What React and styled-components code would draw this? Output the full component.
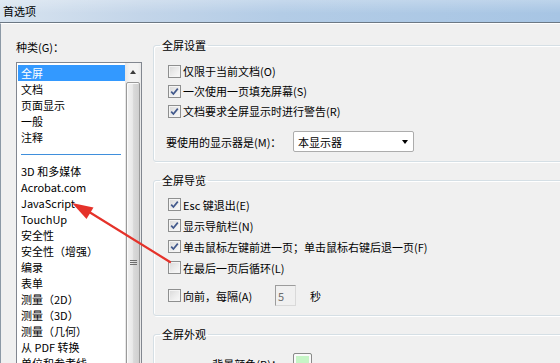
import React from "react";
import styled, { createGlobalStyle } from "styled-components";

const Global = createGlobalStyle`
  *, *::before, *::after { box-sizing: border-box; }
  html, body { margin: 0; padding: 0; overflow: hidden; background: #f0f0f0; }
  body {
    font-family: "Noto Sans CJK SC", "Open Sans", sans-serif;
    font-size: 11px;
    color: #000;
  }
`;

const Window = styled.div`
  position: relative;
  width: 560px;
  height: 363px;
  overflow: hidden;
  display: flex;
  flex-direction: column;
  background: #f0f0f0;
`;

const TitleBar = styled.div`
  height: 23px;
  flex: none;
  display: flex;
  align-items: center;
  padding: 0 0 1px 3px;
  line-height: 16px;
  background:
    linear-gradient(180deg, rgba(255,255,255,0.25) 0%, rgba(255,255,255,0) 60%),
    linear-gradient(90deg, #d7e3ef 0%, #c3d5e9 25%, #b3cce6 50%, #a7c5e4 100%);
  border-bottom: 1px solid #6c7884;
`;

const Body = styled.div`
  flex: 1;
  min-height: 0;
  display: flex;
  border-left: 1px solid #8c99a6;
  border-top: 1px solid #ffffff;
`;

const LeftPane = styled.div`
  width: 152px;
  flex: none;
  padding: 15px 0 0 15px;
  display: flex;
  flex-direction: column;
`;

const FieldLabel = styled.div`
  height: 16px;
  line-height: 16px;
`;

const ListBox = styled.div`
  margin-top: 7px;
  width: 126px;
  height: 330px;
  flex: none;
  border: 1px solid #828790;
  background: #fff;
  display: flex;
`;

const ListItems = styled.div`
  flex: 1;
  padding: 2px 0 0 1px;
  display: flex;
  flex-direction: column;
`;

const ListItem = styled.div`
  height: 16px;
  line-height: 16px;
  padding-left: 3px;
  white-space: nowrap;
  background: ${(p) => (p.$selected ? "#3399ff" : "transparent")};
  color: ${(p) => (p.$selected ? "#fff" : "#000")};
`;

const Separator = styled.div`
  height: 18px;
  display: flex;
  align-items: center;
  padding: 0 4px 0 3px;
  &::after {
    content: "";
    flex: 1;
    height: 1px;
    background: #3f8fdc;
  }
`;

const ScrollBar = styled.div`
  width: 16px;
  flex: none;
  display: flex;
  flex-direction: column;
  background: linear-gradient(90deg, #e6e6e6 0%, #f3f3f3 30%, #f3f3f3 80%, #e9e9e9 100%);
`;

const ScrollButton = styled.div`
  height: 17px;
  flex: none;
  display: flex;
  align-items: center;
  justify-content: center;
  &::after {
    content: "";
    width: 0;
    height: 0;
    border-left: 3.5px solid transparent;
    border-right: 3.5px solid transparent;
    border-bottom: 4px solid #3c3c3c;
  }
`;

const ScrollThumb = styled.div`
  margin: 2px 1px 0 1px;
  height: 362px;
  flex: none;
  border: 1px solid #9a9a9a;
  border-radius: 2px;
  background: linear-gradient(90deg, #f2f2f2 0%, #e9e9e9 45%, #d9d9d9 55%, #cfcfcf 100%);
  box-shadow: inset 1px 1px 0 #fbfbfb;
  display: flex;
  align-items: center;
  justify-content: center;
`;

const Grip = styled.div`
  width: 7px;
  height: 6px;
  background: repeating-linear-gradient(180deg, #6e6e6e 0px, #6e6e6e 1px, transparent 1px, transparent 2px);
`;

const RightPane = styled.div`
  width: 420px;
  flex: none;
  padding-top: 13px;
  display: flex;
  flex-direction: column;
  gap: 10px;
`;

const GroupBox = styled.fieldset`
  margin: 0;
  padding: 0;
  min-width: 0;
  border: 1px solid #d5dfe5;
  border-radius: 3px;
  box-shadow: inset 1px 1px 0 #ffffff, 1px 1px 0 #ffffff;
`;

const Legend = styled.legend`
  margin-left: 6px;
  padding: 0 2px;
  height: 16px;
  line-height: 16px;
`;

const GroupContent = styled.div`
  padding: ${(p) => p.$pad};
  display: flex;
  flex-direction: column;
`;

const CheckRow = styled.div`
  height: ${(p) => p.$h || 20}px;
  display: flex;
  align-items: center;
  gap: 2px;
  line-height: 16px;
  white-space: nowrap;
  margin-top: ${(p) => p.$mt || 0}px;
`;

const Box = styled.span`
  width: 13px;
  height: 13px;
  flex: none;
  border: 1px solid #8e8f8f;
  background: linear-gradient(135deg, #d8d8d8 0%, #ebebeb 50%, #fafafa 100%);
  box-shadow: inset 0 0 0 1px #f4f4f4;
  display: flex;
  align-items: center;
  justify-content: center;
`;

const Check = ({ checked }) => (
  <Box>
    {checked && (
      <svg width="11" height="11" viewBox="0 0 11 11">
        <path d="M2.2 5.6 L4.4 8 L8.8 2.6" fill="none" stroke="#42598c" strokeWidth="1.7" />
      </svg>
    )}
  </Box>
);

const SelectRow = styled.div`
  margin-top: 10px;
  margin-left: -2px;
  height: 21px;
  display: flex;
  align-items: center;
  line-height: 16px;
`;

const SelectLabel = styled.span`
  width: 127px;
  flex: none;
  white-space: nowrap;
`;

const Select = styled.div`
  width: 121px;
  height: 21px;
  border: 1px solid #acacac;
  border-radius: 2px;
  background: #fff;
  display: flex;
  align-items: center;
  padding-left: 4px;
  line-height: 16px;
`;

const SelectText = styled.span`
  flex: 1;
`;

const SelectArrow = styled.span`
  width: 16px;
  height: 100%;
  display: flex;
  align-items: center;
  justify-content: center;
  &::after {
    content: "";
    border-left: 3.5px solid transparent;
    border-right: 3.5px solid transparent;
    border-top: 4px solid #000;
  }
`;

const IntervalLabel = styled.span`
  width: 90px;
  flex: none;
`;

const NumberInput = styled.div`
  width: 21px;
  height: 21px;
  flex: none;
  border: 1px solid #d9d9d9;
  border-top-color: #9c9c9c;
  border-left-color: #9c9c9c;
  background: #f0f0f0;
  color: #6d6d6d;
  padding-left: 2px;
  display: flex;
  align-items: center;
`;

const Unit = styled.span`
  margin-left: 12px;
`;

const SwatchRow = styled.div`
  display: flex;
  align-items: flex-start;
  line-height: 16px;
`;

const SwatchLabel = styled.span`
  width: 139px;
  flex: none;
  text-align: right;
  padding-right: 11px;
  padding-top: 3px;
  white-space: nowrap;
`;

const Swatch = styled.div`
  width: 19px;
  height: 21px;
  border: 1px solid #8a8a8a;
  border-radius: 2px;
  box-shadow: inset 0 0 0 2px #fafafa;
  background: #c6f5c6;
`;

const ArrowLayer = styled.svg`
  position: absolute;
  left: 0;
  top: 0;
  pointer-events: none;
`;

const categories = [
  "文档",
  "页面显示",
  "一般",
  "注释",
  null,
  "3D 和多媒体",
  "Acrobat.com",
  "JavaScript",
  "TouchUp",
  "安全性",
  "安全性（增强）",
  "编录",
  "表单",
  "测量（2D）",
  "测量（3D）",
  "测量（几何）",
  "从 PDF 转换",
  "单位和参考线",
];

export default function App() {
  return (
    <Window>
      <Global />
      <TitleBar>首选项</TitleBar>
      <Body>
        <LeftPane>
          <FieldLabel>种类(G)：</FieldLabel>
          <ListBox>
            <ListItems>
              <ListItem $selected>全屏</ListItem>
              {categories.map((c, i) =>
                c === null ? <Separator key={i} /> : <ListItem key={i}>{c}</ListItem>
              )}
            </ListItems>
            <ScrollBar>
              <ScrollButton />
              <ScrollThumb>
                <Grip />
              </ScrollThumb>
            </ScrollBar>
          </ListBox>
        </LeftPane>
        <RightPane>
          <GroupBox>
            <Legend>全屏设置</Legend>
            <GroupContent $pad="8px 0 9px 14px">
              <CheckRow><Check />仅限于当前文档(O)</CheckRow>
              <CheckRow><Check checked />一次使用一页填充屏幕(S)</CheckRow>
              <CheckRow><Check checked />文档要求全屏显示时进行警告(R)</CheckRow>
              <SelectRow>
                <SelectLabel>要使用的显示器是(M)：</SelectLabel>
                <Select>
                  <SelectText>本显示器</SelectText>
                  <SelectArrow />
                </Select>
              </SelectRow>
            </GroupContent>
          </GroupBox>
          <GroupBox>
            <Legend>全屏导览</Legend>
            <GroupContent $pad="6px 0 9px 14px">
              <CheckRow $h={21}><Check checked />Esc 键退出(E)</CheckRow>
              <CheckRow $h={21}><Check checked />显示导航栏(N)</CheckRow>
              <CheckRow $h={21}><Check checked />单击鼠标左键前进一页；单击鼠标右键后退一页(F)</CheckRow>
              <CheckRow $h={21}><Check />在最后一页后循环(L)</CheckRow>
              <CheckRow $h={21} $mt={7}>
                <Check />
                <IntervalLabel>向前，每隔(A)</IntervalLabel>
                <NumberInput>5</NumberInput>
                <Unit>秒</Unit>
              </CheckRow>
            </GroupContent>
          </GroupBox>
          <GroupBox>
            <Legend>全屏外观</Legend>
            <GroupContent $pad="11px 0 9px 0">
              <SwatchRow>
                <SwatchLabel>背景颜色(B)：</SwatchLabel>
                <Swatch />
              </SwatchRow>
            </GroupContent>
          </GroupBox>
        </RightPane>
      </Body>
      <ArrowLayer width="560" height="363" viewBox="0 0 560 363">
        <line x1="170" y1="262" x2="86" y2="210" stroke="#e5322a" strokeWidth="2.2" strokeLinecap="round" />
        <polygon points="72,203 93.5,207.5 86.5,219" fill="#e5322a" />
      </ArrowLayer>
    </Window>
  );
}
